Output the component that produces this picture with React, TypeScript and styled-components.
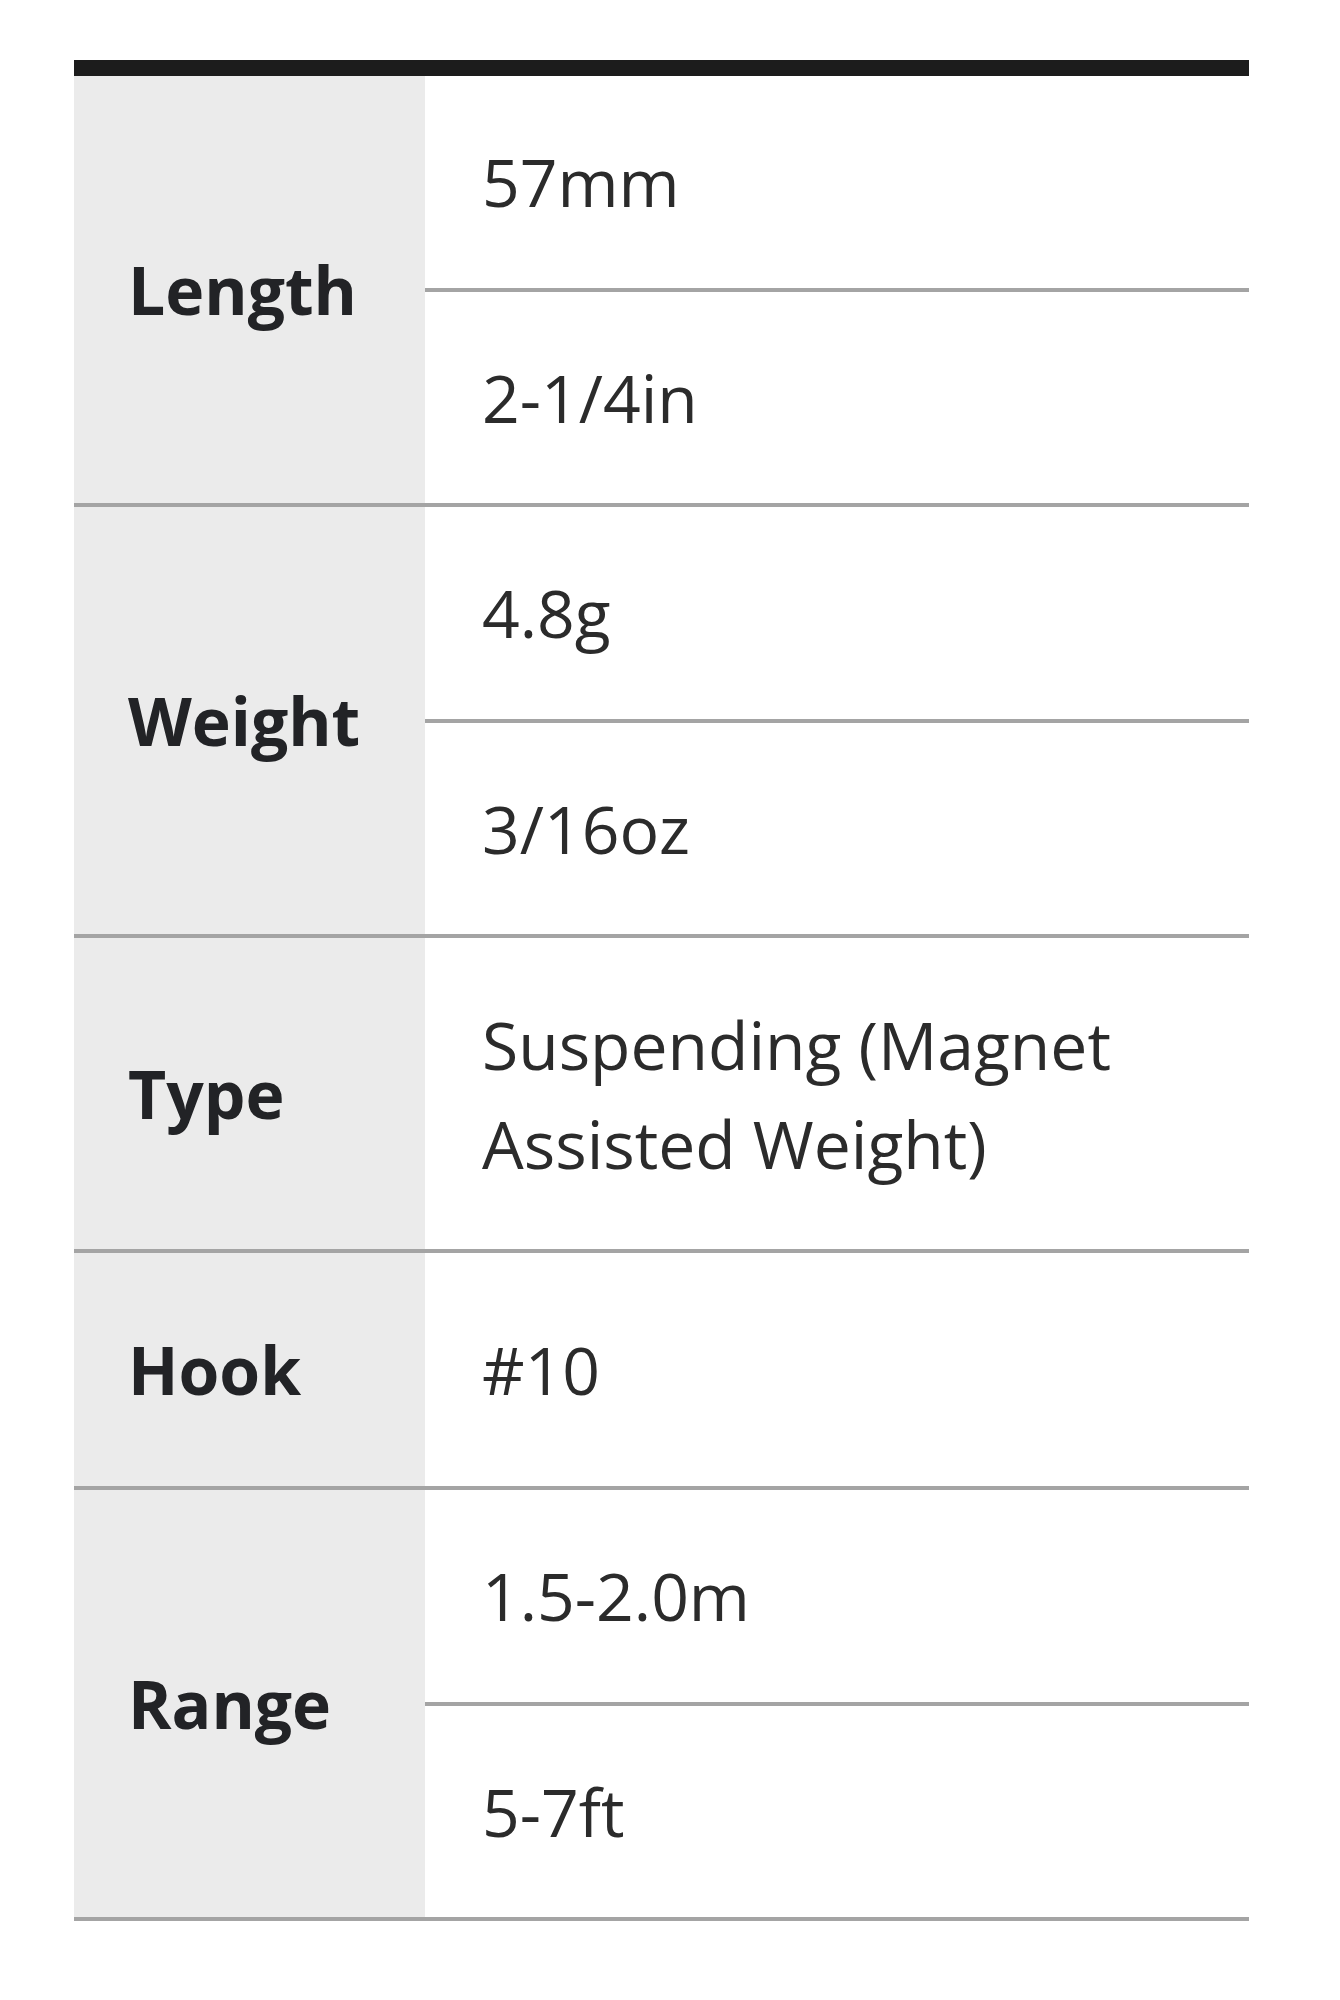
import React from "react";
import styled, { createGlobalStyle } from "styled-components";

const GlobalStyle = createGlobalStyle`
  html, body {
    margin: 0;
    padding: 0;
    background: #ffffff;
  }
  body {
    font-family: "Open Sans", "Noto Sans", Arial, sans-serif;
  }
`;

const Page = styled.div`
  padding: 60px 0 0 74px;
  width: 1175px;
`;

const Table = styled.div`
  border-top: 16px solid #1c1c1c;
  display: flex;
  flex-direction: column;
`;

const Group = styled.div`
  display: grid;
  grid-template-columns: 351px 1fr;
  border-bottom: 4px solid #a4a4a4;
`;

const Label = styled.div`
  background: #ebebeb;
  display: flex;
  align-items: center;
  padding: 67px 20px 67px 54px;
  font-size: 66px;
  line-height: 99px;
  font-weight: 700;
  color: #222326;
`;

const Values = styled.div`
  display: flex;
  flex-direction: column;
  justify-content: center;
`;

const Value = styled.div`
  padding: 56.3px 40px 56.3px 57px;
  font-size: 66px;
  line-height: 99px;
  font-weight: 400;
  color: #2b2b2b;
  & + & {
    border-top: 4px solid #a4a4a4;
  }
`;

type Spec = { label: string; values: string[] };

const specs: Spec[] = [
  { label: "Length", values: ["57mm", "2-1/4in"] },
  { label: "Weight", values: ["4.8g", "3/16oz"] },
  { label: "Type", values: ["Suspending (Magnet Assisted Weight)"] },
  { label: "Hook", values: ["#10"] },
  { label: "Range", values: ["1.5-2.0m", "5-7ft"] },
];

export default function App() {
  return (
    <>
      <GlobalStyle />
      <Page>
        <Table>
          {specs.map((s) => (
            <Group key={s.label}>
              <Label>{s.label}</Label>
              <Values>
                {s.values.map((v) => (
                  <Value key={v}>{v}</Value>
                ))}
              </Values>
            </Group>
          ))}
        </Table>
      </Page>
    </>
  );
}
